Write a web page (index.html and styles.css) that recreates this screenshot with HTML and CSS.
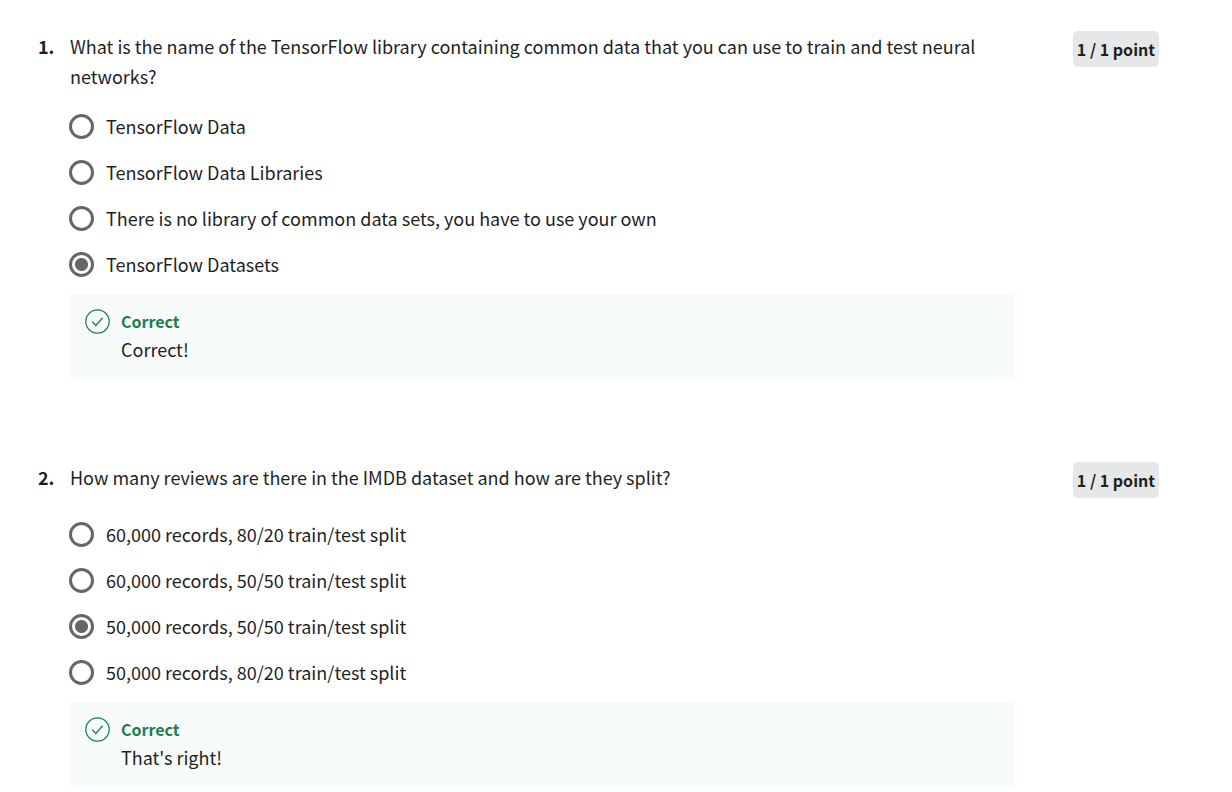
FILE: index.html
```html
<!DOCTYPE html>
<html lang="en">
<head>
<meta charset="utf-8">
<meta name="viewport" content="width=device-width, initial-scale=1">
<title>Quiz results</title>
<link rel="stylesheet" href="styles.css">
</head>
<body>
<form class="quiz">
  <section class="question">
    <div class="number">1.</div>
    <div class="content" role="radiogroup" aria-labelledby="q1">
      <p class="prompt" id="q1">What is the name of the TensorFlow library containing common data that you can use to train and test neural networks?</p>
      <div class="options">
        <label class="option"><input class="radio" type="radio" name="q1"><span>TensorFlow Data</span></label>
        <label class="option"><input class="radio" type="radio" name="q1"><span>TensorFlow Data Libraries</span></label>
        <label class="option"><input class="radio" type="radio" name="q1"><span>There is no library of common data sets, you have to use your own</span></label>
        <label class="option"><input class="radio" type="radio" name="q1" checked><span>TensorFlow Datasets</span></label>
      </div>
      <div class="feedback">
        <svg class="check" viewBox="0 0 24 24" aria-hidden="true"><circle cx="12" cy="12" r="11.2"/><path d="M7 12.2l3.5 3.6 6.4-7.4"/></svg>
        <div>
          <p class="verdict">Correct</p>
          <p class="message">Correct!</p>
        </div>
      </div>
    </div>
    <div class="points">1 / 1 point</div>
  </section>
  <section class="question">
    <div class="number">2.</div>
    <div class="content" role="radiogroup" aria-labelledby="q2">
      <p class="prompt prompt-spaced" id="q2">How many reviews are there in the IMDB dataset and how are they split?</p>
      <div class="options">
        <label class="option"><input class="radio" type="radio" name="q2"><span>60,000 records, 80/20 train/test split</span></label>
        <label class="option"><input class="radio" type="radio" name="q2"><span>60,000 records, 50/50 train/test split</span></label>
        <label class="option"><input class="radio" type="radio" name="q2" checked><span>50,000 records, 50/50 train/test split</span></label>
        <label class="option"><input class="radio" type="radio" name="q2"><span>50,000 records, 80/20 train/test split</span></label>
      </div>
      <div class="feedback">
        <svg class="check" viewBox="0 0 24 24" aria-hidden="true"><circle cx="12" cy="12" r="11.2"/><path d="M7 12.2l3.5 3.6 6.4-7.4"/></svg>
        <div>
          <p class="verdict">Correct</p>
          <p class="message">That's right!</p>
        </div>
      </div>
    </div>
    <div class="points">1 / 1 point</div>
  </section>
</form>
</body>
</html>
```
FILE: styles.css
```css
* { box-sizing: border-box; }
body {
  margin: 0;
  background: #fff;
  color: #1f1f1f;
  font: 18px/30px "Noto Sans CJK SC", "Noto Sans", sans-serif;
}
p { margin: 0; }
.quiz {
  display: flex;
  flex-direction: column;
  gap: 83px;
  padding: 31px 73px 6px 38px;
}
.question {
  display: grid;
  grid-template-columns: 32px minmax(0, 1fr) auto;
  align-items: start;
}
.number { font-weight: 700; }
.content { margin-right: 59px; }
.prompt { margin-bottom: 20px; }
.prompt-spaced { margin-bottom: 27px; }
.options {
  display: flex;
  flex-direction: column;
  gap: 16px;
}
.option {
  display: flex;
  align-items: center;
  gap: 12px;
  margin-left: -1px;
}
.radio {
  appearance: none;
  flex: none;
  width: 25px;
  height: 25px;
  margin: 0;
  border: 3px solid #666;
  border-radius: 50%;
  background: #fff;
}
.radio:checked { background: radial-gradient(circle, #666 6px, #fff 7px); }
.feedback {
  display: flex;
  gap: 11px;
  margin-top: 15px;
  padding: 13px 15px 15px;
  background: #f7fbfa;
}
.check {
  flex: none;
  width: 25px;
  height: 25px;
  margin-top: 2px;
  fill: none;
  stroke: #1d7c50;
  stroke-width: 1.2;
}
.verdict {
  color: #1d7c50;
  font-size: 16px;
  font-weight: 700;
  line-height: 28px;
}
.message { line-height: 29px; }
.points {
  padding: 4px;
  border-radius: 5px;
  background: #e5e7e8;
  font-size: 16px;
  font-weight: 700;
  line-height: 28px;
}
```
